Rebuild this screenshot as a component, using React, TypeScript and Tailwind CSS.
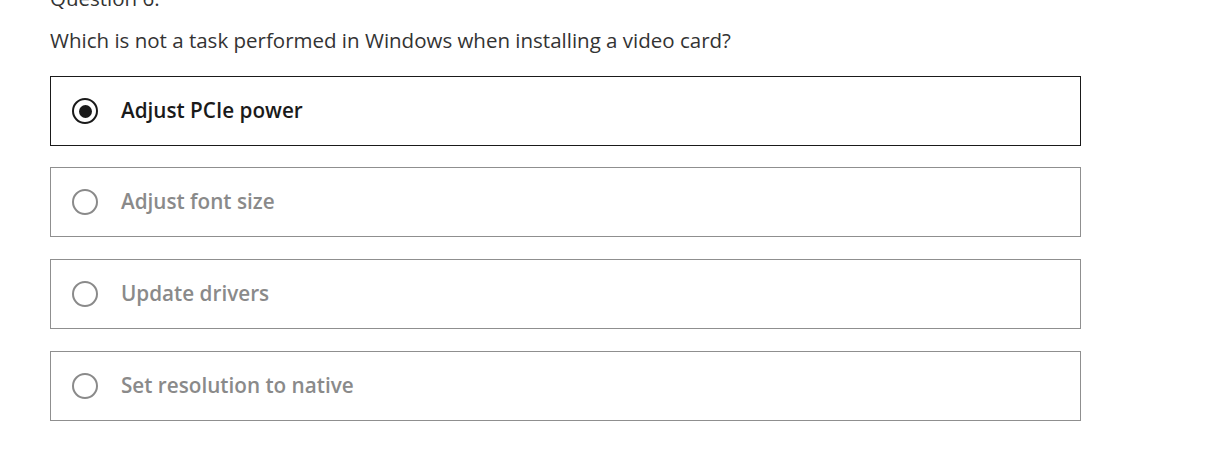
import React from "react";

const options = [
  { label: "Adjust PCIe power", selected: true, mt: "mt-0" },
  { label: "Adjust font size", selected: false, mt: "mt-[21px]" },
  { label: "Update drivers", selected: false, mt: "mt-[22px]" },
  { label: "Set resolution to native", selected: false, mt: "mt-[22px]" },
];

function Radio({ selected }: { selected: boolean }) {
  return selected ? (
    <div className="flex h-[26px] w-[26px] shrink-0 items-center justify-center rounded-full border-2 border-[#1a1a1a]">
      <div className="h-[13px] w-[13px] rounded-full bg-[#1a1a1a]" />
    </div>
  ) : (
    <div className="h-[26px] w-[26px] shrink-0 rounded-full border-2 border-[#8a8a8a]" />
  );
}

export default function App() {
  return (
    <div
      className="h-[474px] w-[1208px] overflow-hidden bg-white pl-[50px]"
      style={{ fontFamily: '"Open Sans", "Noto Sans", sans-serif' }}
    >
      <div className="mt-[-16px] text-[20.5px] leading-[28px] text-[#333333]">Question 6.</div>
      <div className="mt-[14px] text-[20.5px] leading-[28px] text-[#333333]">
        Which is not a task performed in Windows when installing a video card?
      </div>
      <div className="mt-[22px] flex w-[1031px] flex-col">
        {options.map((o) => (
          <div
            key={o.label}
            className={`${o.mt} flex h-[70px] items-center gap-[23px] border pl-[21px] ${
              o.selected ? "border-[#1a1a1a]" : "border-[#8f8f8f]"
            }`}
          >
            <Radio selected={o.selected} />
            <span
              className={`text-[20.7px] font-semibold ${
                o.selected ? "text-[#1a1a1a]" : "text-[#8a8a8a]"
              }`}
            >
              {o.label}
            </span>
          </div>
        ))}
      </div>
    </div>
  );
}
